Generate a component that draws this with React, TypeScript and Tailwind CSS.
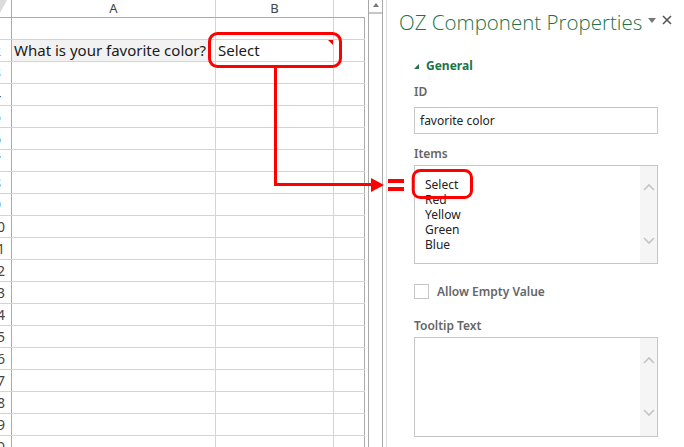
import React from 'react';

const rows = Array.from({ length: 20 }, (_, i) => i + 1);

const Chevron = ({ dir }: { dir: 'up' | 'down' }) => (
  <svg width="12" height="8" viewBox="0 0 12 8" fill="none">
    <polyline
      points={dir === 'up' ? '1,7 6,2 11,7' : '1,1 6,6 11,1'}
      stroke="#c4c4c4"
      strokeWidth="1.6"
    />
  </svg>
);

const ScrollBox: React.FC<{ className: string; up: string; down: string; children?: React.ReactNode }> = ({
  className,
  up,
  down,
  children,
}) => (
  <div className={`flex border border-[#c6c6c6] bg-white ${className}`}>
    <div className="flex-grow min-w-0">{children}</div>
    <div className="w-[17px] bg-[#f5f5f5] flex flex-col items-center">
      <div className={up}>
        <Chevron dir="up" />
      </div>
      <div className={down}>
        <Chevron dir="down" />
      </div>
    </div>
  </div>
);

const Label: React.FC<{ children: React.ReactNode; className?: string }> = ({ children, className = '' }) => (
  <div className={`h-[16px] flex items-center text-[12px] font-semibold text-[#666] ${className}`}>{children}</div>
);

export default function App() {
  return (
    <div className="relative w-[684px] h-[447px] overflow-hidden bg-white flex font-['Noto_Sans',sans-serif]">
      {/* worksheet */}
      <div className="w-[365px] shrink-0 flex flex-col">
        <div className="flex h-[18px] shrink-0 border-b border-[#ababab] text-[13px] leading-[15px] text-[#444]">
          <div className="w-[12px] border-r border-[#ababab] relative">
            <div className="absolute left-0 top-0 w-0 h-0 border-t-[13px] border-t-[#dcdcdc] border-r-[7px] border-r-transparent" />
          </div>
          <div className="w-[204px] border-r border-[#d4d4d4] flex justify-center pt-[1px]">A</div>
          <div className="w-[118px] border-r border-[#d4d4d4] flex justify-center pt-[1px]">B</div>
          <div className="w-[31px]" />
        </div>
        {rows.map((n) => (
          <div key={n} className="flex h-[22px] shrink-0 border-b border-[#d4d4d4]">
            <div className="w-[12px] border-r border-[#ababab] overflow-hidden flex items-center">
              <span className="w-[30px] shrink-0 -ml-[18px] text-center text-[14px] text-[#444]">{n}</span>
            </div>
            <div className="w-[204px] border-r border-[#d4d4d4] flex">
              {n === 2 && (
                <span className="bg-[#f2f2f2] h-full flex items-center pl-[2px] pr-[3px] text-[15px] text-[#1a1a1a] whitespace-nowrap">
                  What is your favorite color?
                </span>
              )}
            </div>
            <div className="w-[118px] border-r border-[#d4d4d4] relative flex items-center pl-[2px]">
              {n === 2 && (
                <>
                  <span className="text-[15px] text-[#1a1a1a]">Select</span>
                  <div className="absolute right-0 top-0 w-0 h-0 border-t-[5px] border-t-[#e00] border-l-[5px] border-l-transparent" />
                </>
              )}
            </div>
            <div className="w-[31px] border-r border-[#ababab]" />
          </div>
        ))}
      </div>

      {/* vertical scrollbar */}
      <div className="ml-[3px] w-[15px] shrink-0 border-x border-[#a8a8a8] flex flex-col">
        <div className="h-[14px] border-b-2 border-[#c6c6c6] flex justify-center pt-[3px]">
          <div className="w-0 h-0 border-b-[4px] border-b-[#777] border-x-[3px] border-x-transparent" />
        </div>
      </div>

      {/* task pane */}
      <div className="ml-[3px] flex-grow border-l border-[#dadada] flex flex-col">
        <div className="h-[44px] shrink-0 flex items-start pl-[12px] pt-[8px]">
          <span className="font-['Open_Sans',sans-serif] font-light text-[20.5px] leading-[28px] text-[#217346] whitespace-nowrap">
            OZ Component Properties
          </span>
          <div className="ml-[6px] mt-[10px] w-0 h-0 border-t-[5px] border-t-[#777] border-x-[4px] border-x-transparent" />
          <svg className="ml-[6px] mt-[7px]" width="10" height="10" viewBox="0 0 10 10">
            <path d="M1 1L9 9M9 1L1 9" stroke="#555" strokeWidth="1.6" />
          </svg>
        </div>

        <div className="pl-[27px] pr-[26px] flex flex-col">
          <div className="mt-[14px] h-[16px] flex items-center gap-[7px]">
            <div className="w-0 h-0 border-b-[5px] border-b-[#217346] border-l-[5px] border-l-transparent" />
            <span className="text-[12px] font-bold text-[#217346]">General</span>
          </div>

          <Label className="mt-[10px]">ID</Label>
          <div className="mt-[7px] h-[27px] border border-[#c6c6c6] flex items-center pl-[5px] text-[12px] text-[#222]">
            favorite color
          </div>

          <Label className="mt-[12px]">Items</Label>
          <ScrollBox className="mt-[3px] h-[99px]" up="mt-[17px]" down="mt-[46px]">
            <div className="pl-[10px] pt-[11px] text-[12px] leading-[15px] text-[#222]">
              <div>Select</div>
              <div>Red</div>
              <div>Yellow</div>
              <div>Green</div>
              <div>Blue</div>
            </div>
          </ScrollBox>

          <div className="mt-[20px] h-[15px] flex items-center gap-[8px]">
            <div className="w-[15px] h-[15px] border border-[#c6c6c6] bg-white" />
            <span className="text-[12px] font-semibold text-[#666]">Allow Empty Value</span>
          </div>

          <Label className="mt-[19px]">Tooltip Text</Label>
          <ScrollBox className="mt-[3px] h-[100px]" up="mt-[18px]" down="mt-[45px]" />
        </div>
      </div>

      {/* annotation overlay */}
      <svg className="absolute inset-0 pointer-events-none" width="684" height="447" viewBox="0 0 684 447">
        <rect x="209.5" y="33.5" width="131" height="33" rx="8" fill="none" stroke="#f00" strokeWidth="3" />
        <polyline points="275.5,68 275.5,184.5 372,184.5" fill="none" stroke="#f00" strokeWidth="3" />
        <polygon points="371,178 384,185 371,192" fill="#f00" />
        <rect x="388" y="179" width="16" height="4" fill="#f00" />
        <rect x="388" y="187" width="16" height="4" fill="#f00" />
        <rect x="413.2" y="170.5" width="58.3" height="27" rx="7" fill="none" stroke="#f00" strokeWidth="3" />
      </svg>
    </div>
  );
}
